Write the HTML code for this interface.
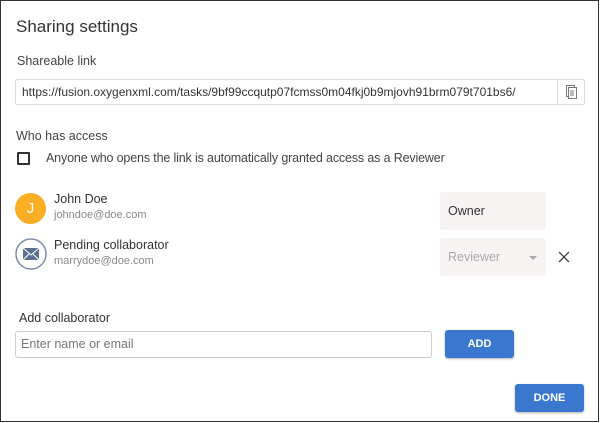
<!DOCTYPE html><html><head><style>
*{box-sizing:border-box;margin:0;padding:0}
body{width:600px;height:423px;overflow:hidden;background:#fff;font-family:"Liberation Sans",Arial,sans-serif;color:#222;position:relative}
.frame{position:absolute;left:0;top:0;width:599px;height:422px;border:1px solid #333}
.a{position:absolute;white-space:nowrap}
.btn{position:absolute;background:#3a78d0;color:#fff;font-weight:bold;font-size:11px;text-align:center;border-radius:3px;box-shadow:0 1px 2px rgba(0,0,0,.3)}
.sel{position:absolute;background:#f7f3f3;border-radius:3px;font-size:12.5px}
</style></head><body><div class="frame"></div>
<div class="a" style="left:16px;top:17px;font-size:17px;color:#333">Sharing settings</div>
<div class="a" style="left:17px;top:54px;font-size:12.5px;color:#444">Shareable link</div>
<div class="a" style="left:15px;top:79px;width:570px;height:26px;border:1px solid #ddd;border-radius:2px"></div>
<div class="a" style="left:557px;top:80px;width:1px;height:24px;background:#ddd"></div>
<div class="a" style="left:22px;top:85px;font-size:12px;color:#333">https://fusion.oxygenxml.com/tasks/9bf99ccqutp07fcmss0m04fkj0b9mjovh91brm079t701bs6/</div>
<svg class="a" style="left:564px;top:84px" width="14" height="16" viewBox="0 0 14 16"><rect x="2.5" y="1.5" width="8" height="11" fill="none" stroke="#777"/><rect x="4.5" y="3.5" width="8" height="11" fill="#fff" stroke="#777"/><path d="M6 7h4M6 9h4M6 11h4" stroke="#777"/></svg>
<div class="a" style="left:16px;top:129px;font-size:12.5px;color:#444">Who has access</div>
<div class="a" style="left:17px;top:152px;width:13px;height:13px;border:2px solid #333;border-radius:1px"></div>
<div class="a" style="left:46px;top:151px;font-size:12.5px;color:#444;letter-spacing:-0.15px">Anyone who opens the link is automatically granted access as a Reviewer</div>
<div class="a" style="left:15px;top:193px;width:31px;height:31px;border-radius:50%;background:#f9ae24;color:#fff;font-size:15px;text-align:center;line-height:31px">J</div>
<div class="a" style="left:54px;top:192px;font-size:12.5px;color:#333">John Doe</div>
<div class="a" style="left:54px;top:209px;font-size:11px;color:#888">johndoe@doe.com</div>
<svg class="a" style="left:15px;top:238px" width="32" height="32" viewBox="0 0 32 32"><circle cx="16" cy="16" r="15" fill="#fff" stroke="#7a8ea8" stroke-width="1.5"/><rect x="8" y="10" width="16" height="12" fill="#5a7191"/><path d="M8 10l8 7 8-7M8 22l6-6M24 22l-6-6" stroke="#fff" fill="none" stroke-width="1"/></svg>
<div class="a" style="left:54px;top:238px;font-size:12.5px;color:#333">Pending collaborator</div>
<div class="a" style="left:54px;top:255px;font-size:11px;color:#888">marrydoe@doe.com</div>
<div class="sel" style="left:440px;top:192px;width:106px;height:38px;padding:12px 8px;color:#333">Owner</div>
<div class="sel" style="left:440px;top:238px;width:106px;height:38px;padding:12px 8px;color:#aaa">Reviewer</div>
<div class="a" style="left:529px;top:256px;width:0;height:0;border-left:4px solid transparent;border-right:4px solid transparent;border-top:4px solid #aaa"></div>
<svg class="a" style="left:558px;top:251px" width="12" height="12" viewBox="0 0 12 12"><path d="M1 1l10 10M11 1L1 11" stroke="#444" stroke-width="1.3"/></svg>
<div class="a" style="left:19px;top:311px;font-size:12.5px;color:#333">Add collaborator</div>
<div class="a" style="left:15px;top:331px;width:417px;height:27px;border:1px solid #ccc;border-radius:3px;padding:5px 5px;font-size:12.5px;color:#777">Enter name or email</div>
<div class="btn" style="left:445px;top:330px;width:69px;height:28px;line-height:28px">ADD</div>
<div class="btn" style="left:515px;top:384px;width:69px;height:28px;line-height:28px">DONE</div>
</body></html>
